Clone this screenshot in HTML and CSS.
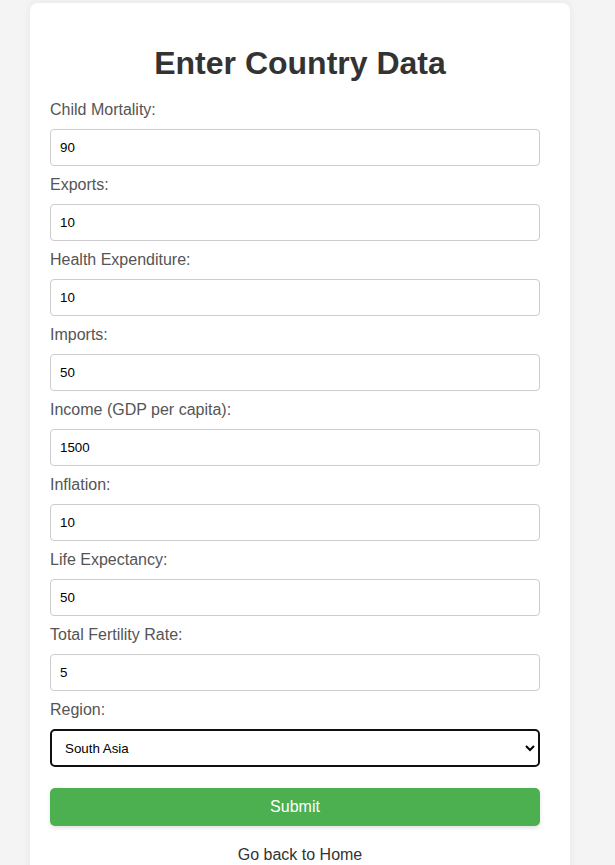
FILE: index.html
```html
<!DOCTYPE html>
<html lang="en">
<head>
<meta charset="utf-8">
<title>Enter Country Data</title>
<link rel="stylesheet" href="styles.css">
</head>
<body>
<div class="card">
  <h1 class="title">Enter Country Data</h1>
  <form class="form">
    <label class="label" for="cm">Child Mortality:</label>
    <input class="field" id="cm" type="text" value="90">
    <label class="label" for="ex">Exports:</label>
    <input class="field" id="ex" type="text" value="10">
    <label class="label" for="he">Health Expenditure:</label>
    <input class="field" id="he" type="text" value="10">
    <label class="label" for="im">Imports:</label>
    <input class="field" id="im" type="text" value="50">
    <label class="label" for="inc">Income (GDP per capita):</label>
    <input class="field" id="inc" type="text" value="1500">
    <label class="label" for="inf">Inflation:</label>
    <input class="field" id="inf" type="text" value="10">
    <label class="label" for="le">Life Expectancy:</label>
    <input class="field" id="le" type="text" value="50">
    <label class="label" for="tf">Total Fertility Rate:</label>
    <input class="field" id="tf" type="text" value="5">
    <label class="label" for="rg">Region:</label>
    <select class="select" id="rg">
      <option selected>South Asia</option>
      <option>East Asia &amp; Pacific</option>
      <option>Europe &amp; Central Asia</option>
      <option>Latin America &amp; Caribbean</option>
      <option>Middle East &amp; North Africa</option>
      <option>North America</option>
      <option>Sub-Saharan Africa</option>
    </select>
    <button class="submit" type="button">Submit</button>
  </form>
  <div class="back"><a class="back-link" href="#">Go back to Home</a></div>
</div>
</body>
</html>
```

FILE: styles.css
```css
html, body {
  margin: 0;
  padding: 0;
}
body {
  background: #f4f4f4;
  font-family: "Liberation Sans", Arial, sans-serif;
  padding: 3px 0 0 30px;
}
.card {
  width: 500px;
  padding: 0 20px 20px;
  background: #fff;
  border-radius: 8px;
  box-shadow: 0 0 8px rgba(0, 0, 0, 0.06);
}
.title {
  margin: 0;
  padding-top: 42px;
  margin-bottom: 19px;
  font-size: 32px;
  line-height: 37px;
  font-weight: bold;
  text-align: center;
  color: #333;
}
.form {
  display: flex;
  flex-direction: column;
  align-items: flex-start;
}
.label {
  display: block;
  font-size: 16px;
  line-height: 18px;
  color: #555;
  margin-bottom: 10px;
}
.field {
  box-sizing: border-box;
  width: 490px;
  height: 37px;
  margin: 0 0 10px;
  padding: 0 9px;
  border: 1px solid #ccc;
  border-radius: 4px;
  font-family: "Liberation Sans", Arial, sans-serif;
  font-size: 13.333px;
  color: #000;
  background: #fff;
}
.select {
  box-sizing: border-box;
  width: 490px;
  height: 38px;
  margin: 0 0 21px;
  padding: 0 9px;
  border: 2px solid #101010;
  border-radius: 5px;
  font-family: "Liberation Sans", Arial, sans-serif;
  font-size: 13.333px;
  color: #000;
  background: #fff;
}
.submit {
  width: 490px;
  height: 38px;
  padding: 0;
  border: none;
  border-radius: 5px;
  background: #4caf50;
  color: #fff;
  font-family: "Liberation Sans", Arial, sans-serif;
  font-size: 16px;
  box-shadow: 0 2px 4px rgba(0, 0, 0, 0.12);
}
.back {
  margin-top: 20px;
  text-align: center;
  font-size: 16px;
  line-height: 18px;
}
.back-link {
  color: #333;
  text-decoration: none;
}
```
